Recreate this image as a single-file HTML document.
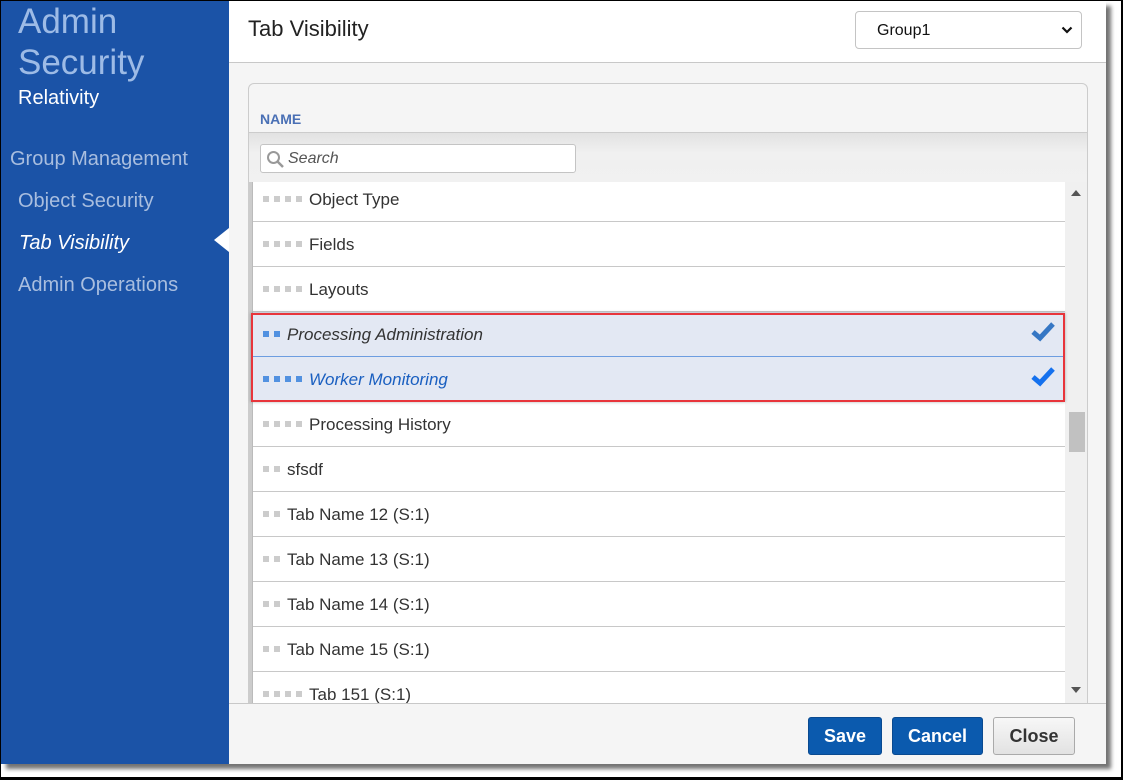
<!DOCTYPE html>
<html><head><style>
*{box-sizing:border-box;margin:0;padding:0}
body{width:1123px;height:780px;background:#fff;position:relative;overflow:hidden;font-family:"Liberation Sans",sans-serif}
.frame{position:absolute;left:0;top:0;width:1123px;height:780px;border:1px solid #000;border-right:2px solid #000;border-bottom:3px solid #000}
.win{position:absolute;left:1px;top:1px;width:1105px;height:763px;background:#f5f5f5;box-shadow:5px 5px 4px rgba(0,0,0,.55);overflow:hidden}
.side{position:absolute;left:0;top:0;width:228px;height:763px;background:#1b53a7}
.t1{position:absolute;left:17px;top:0px;font-size:35px;line-height:41px;color:#9dbbe6}
.rel{position:absolute;left:17px;top:86px;font-size:20px;color:#fff}
.nav{position:absolute;font-size:20px;color:#a9bedf}
.arrow{position:absolute;left:213px;top:227px;width:0;height:0;border-top:12px solid transparent;border-bottom:12px solid transparent;border-right:15px solid #fff}
.hdr{position:absolute;left:228px;top:0;width:877px;height:62px;background:#fff;border-bottom:1px solid #c8c8c8}
.title{position:absolute;left:19px;top:15px;font-size:22px;color:#222}
.sel{position:absolute;left:626px;top:10px;width:227px;height:38px;border:1px solid #c4c4c4;border-radius:4px;font-size:16px;padding:10px 0 0 21px;color:#111}
.panel{position:absolute;left:247px;top:82px;width:840px;height:630px;border:1px solid #ccc;border-radius:6px 6px 0 0;background:#f5f5f5}
.name{position:absolute;left:11px;top:27px;font-size:14px;font-weight:bold;color:#4a70b5}
.sband{position:absolute;left:0;top:48px;width:838px;height:51px;border-top:1px solid #ccc;background:linear-gradient(#e2e2e2,#f0f0f0 40%,#f1f1f1)}
.search{position:absolute;left:11px;top:11px;width:316px;height:29px;border:1px solid #c4c4c4;border-radius:3px;background:#fff;font-size:16px;font-style:italic;color:#555;padding:5px 0 0 27px}
.list{position:absolute;left:252px;top:182px;width:813px;height:521px;background:#fff;overflow:hidden;border-left:1px solid #bbb}
.lb{position:absolute;left:248px;top:182px;width:5px;height:521px;background:#ccc}
.row{position:absolute;left:0;width:813px;height:45px;border-bottom:1px solid #c8c8c8;font-size:17px;color:#333;padding-top:13px}
.d{display:inline-block;width:6px;height:6px;background:#ccc;margin-right:5px;vertical-align:3px}
.row .ds{display:inline-block;padding-left:10px;margin-right:2px}
.hl{background:#e3e8f3}
.hl .d{background:#5291e0}
.sb{position:absolute;left:1065px;top:182px;width:22px;height:521px;background:#f0f0f0}
.thumb{position:absolute;left:4px;top:230px;width:16px;height:40px;background:#c1c1c1}
.box{position:absolute;left:251px;top:313px;width:814px;height:89px;border:2px solid #e8353b;box-shadow:0 0 3px rgba(0,0,0,.3)}
.ftr{position:absolute;left:229px;top:703px;width:877px;height:61px;border-top:1px solid #c8c8c8;background:#f5f5f5}
.btn{position:absolute;top:13px;height:38px;border-radius:3px;font-size:18px;font-weight:bold;text-align:center;padding-top:8px}
.blue{background:#0b5aae;color:#fff;border:1px solid #0a4a90}
.grey{background:linear-gradient(#f7f7f7,#e2e2e2);color:#333;border:1px solid #aaa}
.chk{position:absolute;right:10px;top:9px}
</style></head><body>
<div class="frame"></div>
<div class="win">
 <div class="side">
  <div class="t1">Admin<br>Security</div>
  <div class="rel">Relativity</div>
  <div class="nav" style="left:9px;top:147px">Group Management</div>
  <div class="nav" style="left:17px;top:189px">Object Security</div>
  <div class="nav" style="left:18px;top:231px;color:#fff;font-style:italic">Tab Visibility</div>
  <div class="nav" style="left:17px;top:273px">Admin Operations</div>
  <div class="arrow"></div>
 </div>
 <div class="hdr">
  <div class="title">Tab Visibility</div>
  <div class="sel">Group1<svg style="position:absolute;right:8px;top:14px" width="12" height="8" viewBox="0 0 12 8"><path d="M1.5 1.5 L6 6 L10.5 1.5" stroke="#111" stroke-width="2.2" fill="none"/></svg></div>
 </div>
 <div class="panel">
  <div class="name">NAME</div>
  <div class="sband"><div class="search"><svg style="position:absolute;left:5px;top:5px" width="19" height="19" viewBox="0 0 19 19"><circle cx="7.5" cy="7.5" r="5.5" stroke="#999" stroke-width="2" fill="none"/><path d="M11.5 11.5 L17 17" stroke="#999" stroke-width="2.5"/></svg>Search</div></div>
 </div>
</div>
<div class="lb"></div>
<div class="list">
 <div class="row" style="top:-5px"><span class="ds"><i class="d"></i><i class="d"></i><i class="d"></i><i class="d"></i></span>Object Type</div>
 <div class="row" style="top:40px"><span class="ds"><i class="d"></i><i class="d"></i><i class="d"></i><i class="d"></i></span>Fields</div>
 <div class="row" style="top:85px"><span class="ds"><i class="d"></i><i class="d"></i><i class="d"></i><i class="d"></i></span>Layouts</div>
 <div class="row hl" style="top:130px;border-bottom:1px solid #6d9de0;font-style:italic"><span class="ds"><i class="d"></i><i class="d"></i></span>Processing Administration<svg class="chk" width="26" height="22" viewBox="0 0 26 22"><path d="M3 11 L10 17 L23 3" stroke="#3677c4" stroke-width="5" fill="none"/></svg></div>
 <div class="row hl" style="top:175px;font-style:italic;color:#1a5fc0"><span class="ds"><i class="d"></i><i class="d"></i><i class="d"></i><i class="d"></i></span>Worker Monitoring<svg class="chk" width="26" height="22" viewBox="0 0 26 22"><path d="M3 11 L10 17 L23 3" stroke="#1571ee" stroke-width="5" fill="none"/></svg></div>
 <div class="row" style="top:220px"><span class="ds"><i class="d"></i><i class="d"></i><i class="d"></i><i class="d"></i></span>Processing History</div>
 <div class="row" style="top:265px"><span class="ds"><i class="d"></i><i class="d"></i></span>sfsdf</div>
 <div class="row" style="top:310px"><span class="ds"><i class="d"></i><i class="d"></i></span>Tab Name 12 (S:1)</div>
 <div class="row" style="top:355px"><span class="ds"><i class="d"></i><i class="d"></i></span>Tab Name 13 (S:1)</div>
 <div class="row" style="top:400px"><span class="ds"><i class="d"></i><i class="d"></i></span>Tab Name 14 (S:1)</div>
 <div class="row" style="top:445px"><span class="ds"><i class="d"></i><i class="d"></i></span>Tab Name 15 (S:1)</div>
 <div class="row" style="top:490px"><span class="ds"><i class="d"></i><i class="d"></i><i class="d"></i><i class="d"></i></span>Tab 151 (S:1)</div>
</div>
<div class="sb"><svg style="position:absolute;left:6px;top:8px" width="10" height="6"><path d="M0 6 L5 0 L10 6Z" fill="#555"/></svg><div class="thumb"></div><svg style="position:absolute;left:6px;top:505px" width="10" height="6"><path d="M0 0 L5 6 L10 0Z" fill="#555"/></svg></div>
<div class="box"></div>
<div class="ftr">
 <div class="btn blue" style="left:579px;width:74px">Save</div>
 <div class="btn blue" style="left:663px;width:91px">Cancel</div>
 <div class="btn grey" style="left:764px;width:82px">Close</div>
</div>
</body></html>
